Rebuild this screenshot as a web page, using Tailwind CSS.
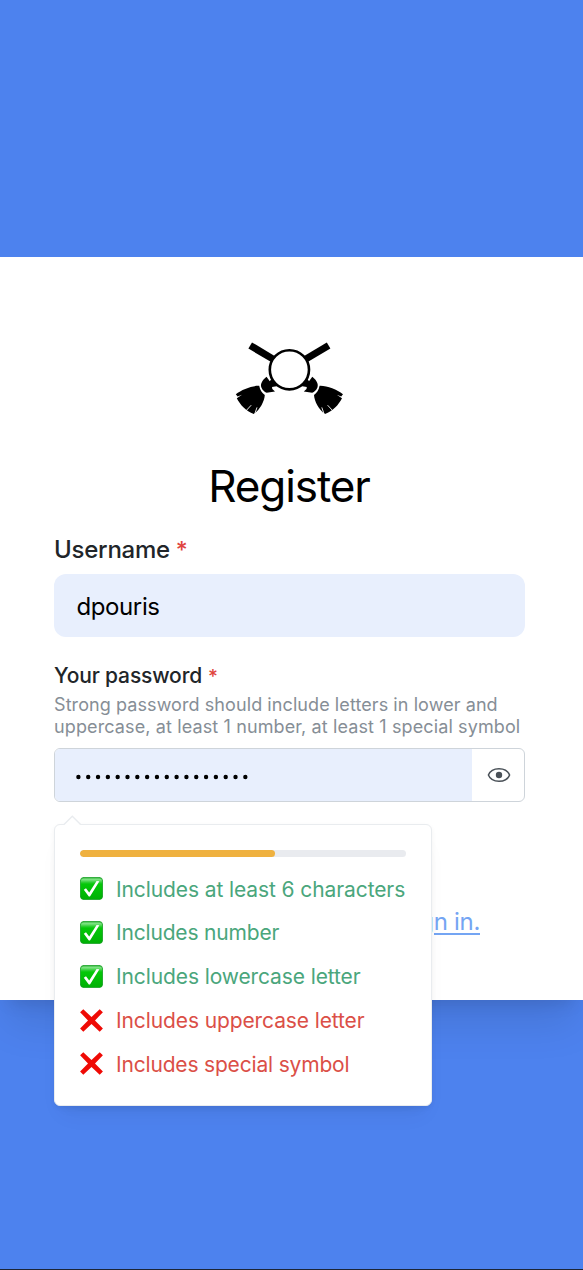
<!DOCTYPE html>
<html lang="en">
<head>
<meta charset="utf-8">
<title>Register</title>
<script src="https://cdn.jsdelivr.net/npm/@tailwindcss/browser@4"></script>
</head>
<body class="h-[1270px] overflow-hidden border-b border-[#1c2536] bg-[#4d82ee] pt-[257px] font-['Inter',sans-serif]">
<svg width="0" height="0" class="absolute">
  <defs>
    <linearGradient id="green" x1="0" y1="0" x2="0" y2="1"><stop offset="0" stop-color="#35b53c"/><stop offset=".1" stop-color="#7fe484"/><stop offset=".22" stop-color="#2fce35"/><stop offset=".3" stop-color="#04c808"/><stop offset="1" stop-color="#00b005"/></linearGradient>
    <symbol id="check" viewBox="0 0 23 23"><rect x=".4" y=".4" width="22.2" height="22.2" rx="3.6" fill="url(#green)" stroke="#0c9a1a" stroke-width=".8"/><path d="M3.8 12.8 6 11.3 9.2 15.4 16.6 3.9 19.4 4.2 10 19.4H8.8Z" fill="#fff"/></symbol>
    <symbol id="cross" viewBox="0 0 23 23"><path d="M3.3.2 11.5 8 19.7.2 22.9 3.3 15 11.4 22.9 19.5 19.7 22.8 11.5 14.9 3.3 22.8.1 19.5 8 11.4.1 3.3Z" fill="#ef0a05"/></symbol>
  </defs>
</svg>
<main class="h-[743px] bg-white px-[54px] pt-[80px] shadow-[0_31px_39px_-8px_rgb(0_0_0/0.1),0_12px_16px_-9px_rgb(0_0_0/0.1)]">
  <svg class="ml-[176px] block" width="120" height="84" viewBox="230 337 120 84">
    <g id="broom">
      <path d="M252 342.4 275.5 356.5 271.6 362.2 248.4 348.6Z"/>
      <path d="M266.5 376.8C261.8 380.4 260.2 384.6 261.4 387.6 262.6 390.4 264.4 392 266.6 392.8L275 391.6 272.3 388.9 272 387 278 386 272.5 377.5 269.8 381.3Z"/>
      <path d="M259.2 385.8C252 385.5 241.8 389.5 235.8 394.3L237.6 396.4 242 394.8 236.8 398.3C240.2 405 246 411.1 253.8 414.1 260 409.5 264.4 401.5 264.8 395 262 393 260 390 259.2 385.8Z"/>
      <path d="M246 410.8 251.2 405.2M254.6 414.4 257 407.4" stroke="#fff" stroke-width=".9"/>
    </g>
    <use href="#broom" transform="translate(578.8 0) scale(-1 1)"/>
    <circle cx="289.4" cy="369.8" r="19.6" fill="#fff" stroke="#000" stroke-width="2.6"/>
  </svg>
  <h1 class="mt-[35px] mr-[5px] h-[60px] text-center text-[44px] leading-[60px] tracking-[-1.1px] text-black">Register</h1>
  <div class="mt-[17px] h-[34px] text-[24px] leading-[34px] font-medium text-[#212529]"><span class="tracking-[-0.25px]">Username</span><span class="ml-[6px] text-[23px] text-[#e0443e]">*</span></div>
  <div class="mt-[7px] flex h-[63px] w-[471px] items-center rounded-[12px] bg-[#e8effd] pt-[2px] pl-[22.5px] text-[24px] tracking-[-0.4px] text-black">dpouris</div>
  <div class="mt-[23px] h-[32px] text-[21px] leading-[32px] font-medium text-[#212529]"><span class="tracking-[-0.15px]">Your password</span><span class="ml-[6px] text-[19px] text-[#e0443e]">*</span></div>
  <p class="mt-[2px] text-[18px] leading-[22px] whitespace-nowrap text-[#868e96]"><span class="tracking-[0.08px]">Strong password should include letters in lower and</span><br><span class="tracking-[0.12px]">uppercase, at least 1 number, at least 1 special symbol</span></p>
  <div class="mt-[10px] flex h-[54px] w-[471px] overflow-hidden rounded-[6px] border-[1.5px] border-[#ced4da]">
    <div class="flex w-[417px] items-center bg-[#e8effd] pt-px pl-[21px]">
      <svg width="180" height="8" viewBox="0 0 180 8"><path d="M2.4 5H172" fill="none" stroke="#000" stroke-width="4.4" stroke-linecap="round" stroke-dasharray="0 9.82"/></svg>
    </div>
    <div class="flex flex-1 items-center justify-center pl-[2px]"><svg width="24" height="16" viewBox="0 0 24 16"><path d="M1.4 8C3 4 7.2 1.7 12 1.7S21 4 22.6 8C21 12 16.8 14.3 12 14.3S3 12 1.4 8Z" fill="none" stroke="#495057" stroke-width="1.5"/><circle cx="12" cy="8" r="3.2" fill="#495057"/></svg></div>
  </div>
  <div class="relative mt-[22px]">
    <p class="pt-[81px] pr-[49px] text-right text-[24px] leading-[34px] tracking-[-0.3px] text-[#74a5f3]"><a class="underline decoration-2 underline-offset-[3px]">Sign in.</a></p>
    <section class="absolute top-0 left-0 h-[282px] w-[378px] rounded-[6px] border-[1.5px] border-[#e9ecef] bg-white px-[25px] pt-[25px] shadow-[0_2px_5px_rgb(0_0_0/0.05),0_15px_23px_-8px_rgb(0_0_0/0.05),0_11px_11px_-8px_rgb(0_0_0/0.04)]">
      <svg class="absolute top-[-10px] left-[8px]" width="20" height="11" viewBox="0 0 20 11"><path d="M1 10 9.3 1.5 17.6 10V11H1Z" fill="#fff"/><path d="M1 9.4 9.3 1.3 17.6 9.4" fill="none" stroke="#e9ecef" stroke-width="1.4"/></svg>
      <div class="h-[7px] w-[325.5px] overflow-hidden rounded-full bg-[#e9ebef]"><div class="h-full w-[60%] rounded-full bg-[#efb13f]"></div></div>
      <ul class="mt-[10px] text-[21px] leading-[44px] tracking-[-0.11px] whitespace-nowrap text-[#4aa67c]">
        <li class="flex h-[43.75px] items-center gap-[13px]"><svg class="shrink-0" width="23" height="23"><use href="#check"/></svg><span class="pt-[2px] tracking-[-0.1px]">Includes at least 6 characters</span></li>
        <li class="flex h-[43.75px] items-center gap-[13px]"><svg class="shrink-0" width="23" height="23"><use href="#check"/></svg><span class="pt-px tracking-[-0.18px]">Includes number</span></li>
        <li class="flex h-[43.75px] items-center gap-[13px]"><svg class="shrink-0" width="23" height="23"><use href="#check"/></svg><span class="pt-[2px]">Includes lowercase letter</span></li>
        <li class="flex h-[43.75px] items-center gap-[13px] text-[#db4f47]"><svg class="shrink-0" width="23" height="23"><use href="#cross"/></svg><span class="pt-[2px]">Includes uppercase letter</span></li>
        <li class="flex h-[43.75px] items-center gap-[13px] text-[#db4f47]"><svg class="shrink-0" width="23" height="23"><use href="#cross"/></svg><span class="pt-[2px] tracking-[-0.18px]">Includes special symbol</span></li>
      </ul>
    </section>
  </div>
</main>
</body>
</html>
